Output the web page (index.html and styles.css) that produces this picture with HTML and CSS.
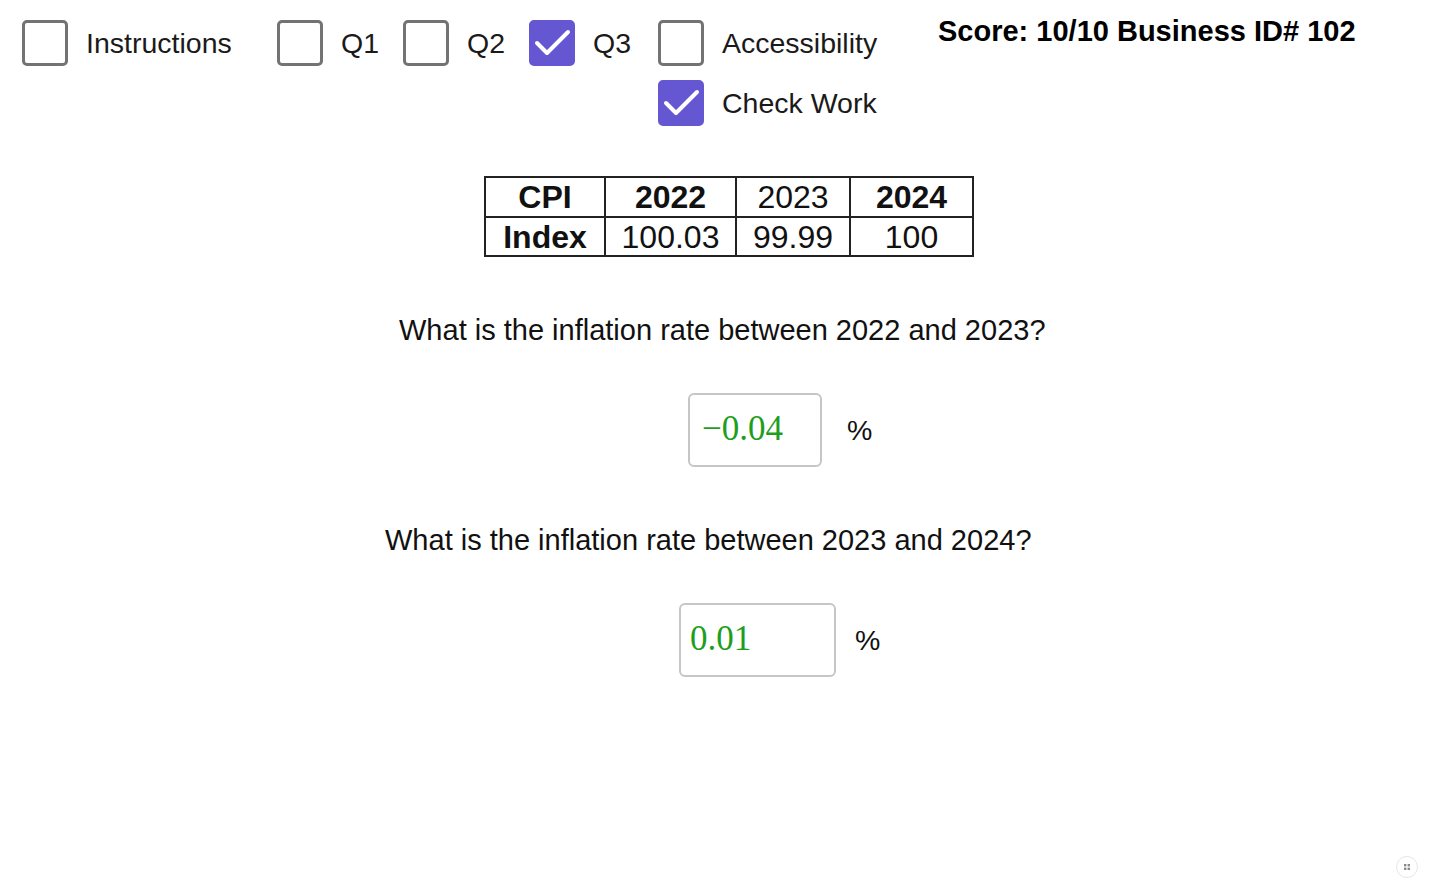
FILE: index.html
```html
<!DOCTYPE html>
<html>
<head>
<meta charset="utf-8">
<link rel="stylesheet" href="styles.css">
</head>
<body>
<div class="page">
  <div class="top">
    <div class="item w-instr"><span class="box"></span><span class="lbl">Instructions</span></div>
    <div class="item w-q"><span class="box"></span><span class="lbl">Q1</span></div>
    <div class="item w-q"><span class="box"></span><span class="lbl">Q2</span></div>
    <div class="item w-q3"><span class="box checked"><svg viewBox="0 0 46 46"><path d="M8 23 L18 33 L39 12"/></svg></span><span class="lbl">Q3</span></div>
    <div class="col">
      <div class="item"><span class="box"></span><span class="lbl">Accessibility</span></div>
      <div class="item"><span class="box checked"><svg viewBox="0 0 46 46"><path d="M8 23 L18 33 L39 12"/></svg></span><span class="lbl">Check Work</span></div>
    </div>
    <div class="score">Score: 10/10 Business ID# 102</div>
  </div>

  <div class="table-wrap">
    <div class="cpi">
      <div class="cell b">CPI</div>
      <div class="cell b">2022</div>
      <div class="cell">2023</div>
      <div class="cell b">2024</div>
      <div class="cell b">Index</div>
      <div class="cell">100.03</div>
      <div class="cell">99.99</div>
      <div class="cell">100</div>
    </div>
  </div>

  <p class="question q1">What is the inflation rate between 2022 and 2023?</p>
  <div class="answer a1">
    <div class="input in1">−0.04</div>
    <span class="pct pct1">%</span>
  </div>

  <p class="question q2">What is the inflation rate between 2023 and 2024?</p>
  <div class="answer a2">
    <div class="input in2">0.01</div>
    <span class="pct pct2">%</span>
  </div>
</div>
<div class="corner"><svg viewBox="0 0 10 10"><rect x="2" y="2" width="2.4" height="2.4"/><rect x="5.6" y="2" width="2.4" height="2.4"/><rect x="2" y="5.6" width="2.4" height="2.4"/><rect x="5.6" y="5.6" width="2.4" height="2.4"/></svg></div>
</body>
</html>
```

FILE: styles.css
```css
html, body {
  margin: 0;
  padding: 0;
  background: #ffffff;
}
body {
  font-family: "Liberation Sans", Arial, sans-serif;
  color: #111;
  width: 1432px;
  height: 891px;
  overflow: hidden;
}
.page {
  display: flex;
  flex-direction: column;
}
.top {
  display: flex;
  align-items: flex-start;
  padding: 20px 0 0 22px;
}
.item {
  display: flex;
  align-items: center;
  gap: 18px;
}
.w-instr { width: 255px; }
.w-q { width: 126px; }
.w-q3 { width: 129px; }
.col {
  display: flex;
  flex-direction: column;
  gap: 14px;
  width: 280px;
}
.box {
  box-sizing: border-box;
  width: 46px;
  height: 46px;
  border: 3px solid #737373;
  border-radius: 5px;
  flex: none;
  display: flex;
}
.box.checked {
  background: #6557d2;
  border-color: #6557d2;
}
.box svg {
  width: 46px;
  height: 46px;
  margin: -3px;
}
.box svg path {
  fill: none;
  stroke: #fff;
  stroke-width: 4;
  stroke-linecap: round;
  stroke-linejoin: round;
}
.lbl {
  font-size: 28.5px;
  color: #1a1a1a;
  white-space: nowrap;
}
.score {
  font-size: 29px;
  font-weight: bold;
  color: #000;
  margin-top: -5px;
  white-space: nowrap;
}
.table-wrap {
  margin-top: 50px;
  padding-left: 484px;
}
.cpi {
  display: inline-grid;
  grid-template-columns: 118px 129px 112px 121px;
  grid-template-rows: 38px 37px;
  gap: 2px;
  padding: 2px;
  background: #222;
}
.cell {
  background: #fff;
  display: flex;
  align-items: center;
  justify-content: center;
  font-size: 32px;
  color: #111;
  padding-top: 1px;
}
.cell.b { font-weight: bold; }
.question {
  margin: 0;
  font-size: 29px;
  color: #111;
  white-space: nowrap;
}
.q1 { margin-top: 57px; padding-left: 399px; }
.q2 { margin-top: 57px; padding-left: 385px; }
.answer {
  display: flex;
  align-items: center;
  margin-top: 46px;
}
.a1 { padding-left: 688px; }
.a2 { padding-left: 679px; }
.input {
  box-sizing: border-box;
  height: 74px;
  border: 2px solid #c6c6c6;
  border-radius: 6px;
  display: flex;
  align-items: center;
  font-family: "Liberation Serif", "Times New Roman", serif;
  font-size: 35px;
  color: #1e9e1e;
  padding-bottom: 3px;
}
.in1 { width: 134px; padding-left: 12px; }
.in2 { width: 157px; padding-left: 9px; }
.pct {
  font-size: 28.5px;
  color: #111;
}
.pct1 { margin-left: 25px; }
.pct2 { margin-left: 19px; }
.corner {
  position: absolute;
  right: 14px;
  bottom: 13px;
  width: 20px;
  height: 20px;
  border-radius: 50%;
  border: 1px solid #e6e6e6;
  display: flex;
  align-items: center;
  justify-content: center;
}
.corner svg {
  width: 10px;
  height: 10px;
  fill: #8a8a8a;
}
```
